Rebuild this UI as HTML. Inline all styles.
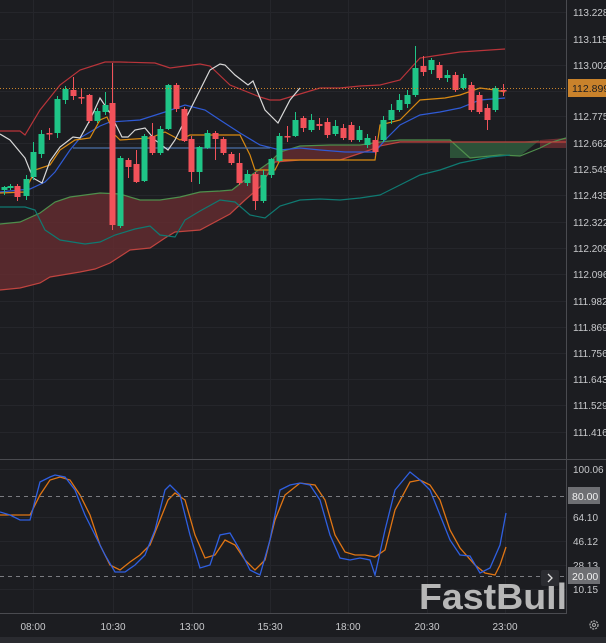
<!DOCTYPE html>
<html><head><meta charset="utf-8"><style>
html,body{margin:0;padding:0;background:#1c1d21;width:606px;height:643px;overflow:hidden;font-family:"Liberation Sans",sans-serif}
svg{position:absolute;left:0;top:0}
</style></head><body>
<svg id="s" width="606" height="643" viewBox="0 0 606 643">
<rect width="606" height="643" fill="#1c1d21"/>
<g id="grid" stroke="#25262b" stroke-width="1"></g>
<g id="cloud"></g>
<g id="lines" fill="none" stroke-width="1.2"></g>
<g id="candles"></g>
<line x1="0" y1="88.5" x2="566" y2="88.5" stroke="#c9822b" stroke-dasharray="1,2" stroke-width="1"/>
<g id="stoch" fill="none" stroke-width="1.3"></g>
<line x1="0" y1="496.5" x2="566" y2="496.5" stroke="#7a7b80" stroke-dasharray="4,4"/>
<line x1="0" y1="576.5" x2="566" y2="576.5" stroke="#7a7b80" stroke-dasharray="4,4"/>
<line x1="566.5" y1="0" x2="566.5" y2="614" stroke="#4a4b50"/>
<line x1="0" y1="459.5" x2="606" y2="459.5" stroke="#4a4b50"/>
<line x1="0" y1="613.5" x2="566" y2="613.5" stroke="#4a4b50"/>
<rect x="0" y="637" width="606" height="6" fill="#2a2b30"/>
<text x="419" y="609" font-size="36" font-weight="bold" fill="#c4c4c4" fill-opacity="0.92" textLength="148" lengthAdjust="spacingAndGlyphs">FastBull</text>
<g id="axis" font-size="10" fill="#c8c9cc"></g>
<rect x="568" y="79" width="38" height="18" fill="#c9822b"/>
<text x="572" y="92" font-size="10.5" fill="#1c1d21">112.899</text>
<rect x="568" y="487" width="32" height="17" fill="#6e6f73"/>
<text x="572" y="500" font-size="10.5" fill="#f0f0f0">80.00</text>
<rect x="568" y="567" width="32" height="17" fill="#6e6f73"/>
<text x="572" y="580" font-size="10.5" fill="#f0f0f0">20.00</text>
<rect x="541" y="570" width="18" height="16" rx="2" fill="#2b2c31"/>
<path d="M548 574 L552 578 L548 582" stroke="#ddd" fill="none" stroke-width="1.3"/>
<circle cx="594" cy="625" r="4" fill="none" stroke="#aaa" stroke-width="1.3" stroke-dasharray="2,1"/>
<circle cx="594" cy="625" r="1.5" fill="none" stroke="#aaa"/>
</svg>
<script>
var NS="http://www.w3.org/2000/svg";
function el(p,t,a){var e=document.createElementNS(NS,t);for(var k in a)e.setAttribute(k,a[k]);document.getElementById(p).appendChild(e);return e;}
function pts(a){return a.map(function(p){return p[0]+","+p[1]}).join(" ");}
[12,39,65,91,116,143,169,195,222,248,274,301,327,353,379,405,432,469,517,541,565,589].forEach(function(y){el("grid","line",{x1:0,x2:566,y1:y+.5,y2:y+.5});});
[33,113,192,270,348,427,505].forEach(function(x){el("grid","line",{x1:x+.5,x2:x+.5,y1:0,y2:614});});
var pl=[["113.228",12],["113.115",39],["113.002",65],["112.775",116],["112.662",143],["112.549",169],["112.435",195],["112.322",222],["112.209",248],["112.096",274],["111.982",301],["111.869",327],["111.756",353],["111.643",379],["111.529",405],["111.416",432],["100.06",469],["64.10",517],["46.12",541],["28.13",565],["10.15",589]];
pl.forEach(function(l){var t=el("axis","text",{x:573,y:l[1]+4});t.textContent=l[0];});
[["08:00",33],["10:30",113],["13:00",192],["15:30",270],["18:00",348],["20:30",427],["23:00",505]].forEach(function(l){var t=el("axis","text",{x:l[1],y:630,"text-anchor":"middle"});t.textContent=l[0];});
var A=[[0,224],[20,222],[40,213],[55,202],[70,197],[100,193],[120,194],[140,200],[160,200],[180,197],[200,192],[220,191],[232,190],[250,176],[270,162],[280,152],[300,146],[330,145],[360,145],[380,142],[400,140],[450,140],[566,140]];
var B=[[0,290],[20,288],[40,283],[50,277],[80,272],[95,269],[110,263],[130,250],[150,248],[165,238],[175,232],[200,230],[230,214],[245,200],[260,187],[275,162],[300,160],[340,160],[370,150],[380,146],[400,142],[450,142],[566,142]];
el("cloud","polygon",{points:pts(A.filter(function(p){return p[0]<=450}))+" "+pts(B.filter(function(p){return p[0]<=450}).reverse()),fill:"#6b2e32","fill-opacity":"0.75"});
el("cloud","polygon",{points:"450,140 540,140 566,138 566,140 450,140",fill:"#6b2e32"});
el("cloud","polygon",{points:"450,142 520,142 540,140 520,156 500,155 470,158 450,158",fill:"#2f5a3c","fill-opacity":"0.85"});
el("cloud","polygon",{points:"540,140 566,140 566,148 540,148",fill:"#6b2e32","fill-opacity":"0.8"});
el("lines","polyline",{points:pts(A.filter(function(p){return p[0]<=450}))+" 470,158 500,155 520,156 540,148 552,142 566,138",stroke:"#4e8f4c"});
el("lines","polyline",{points:pts(B),stroke:"#c0443f"});
var L=[
["#b8343a",[[0,131],[20,131],[25,135],[40,110],[60,85],[80,70],[105,62],[120,62],[155,63],[170,68],[200,64],[210,66],[230,85],[260,97],[270,100],[280,100],[300,94],[320,88],[340,88],[360,86],[380,85],[400,80],[420,58],[440,55],[460,52],[490,50],[505,49]]],
["#0f7a72",[[0,207],[25,207],[35,210],[45,230],[60,240],[85,244],[100,242],[115,235],[135,229],[150,226],[160,235],[175,237],[185,220],[200,211],[220,200],[235,202],[250,215],[265,218],[280,206],[300,200],[320,199],[340,200],[360,198],[380,195],[400,185],[420,175],[440,170],[460,163],[490,157],[510,155]]],
["#2f5bd6",[[0,192],[30,189],[45,182],[55,172],[70,150],[80,138],[100,126],[110,122],[140,120],[165,112],[185,105],[205,110],[220,120],[240,133],[260,145],[280,150],[300,148],[320,150],[345,152],[375,152],[385,140],[400,125],[420,115],[440,112],[460,108],[480,100],[505,98]]],
["#d98a12",[[0,193],[25,192],[35,170],[50,165],[60,150],[75,140],[90,138],[100,120],[107,117],[115,135],[120,140],[150,138],[165,132],[180,140],[190,135],[240,135],[250,155],[255,170],[275,170],[280,160],[300,160],[375,160],[380,125],[400,120],[420,100],[445,98],[460,95],[480,88],[495,90],[505,92]]],
["#4a6fa8",[[73,148],[270,148]]],
["#d8d8d8",[[0,134],[10,140],[25,158],[33,178],[42,183],[50,161],[60,147],[73,137],[80,138],[90,120],[100,98],[110,113],[122,137],[128,137],[135,130],[145,128],[155,140],[168,150],[175,140],[185,120],[200,90],[210,70],[220,64],[225,65],[235,75],[248,85],[253,81],[265,110],[278,123],[290,100],[300,88]]]
];
L.forEach(function(l){el("lines","polyline",{points:pts(l[1]),stroke:l[0]});});
var C=[[4,190,187,186,195],[10,188,186,184,190],[17,186,197,184,201],[26,196,179,175,200],[33,177,152,142,180],[41,154,134,130,158],[49,133,134,128,140],[57,133,99,96,138],[65,100,89,86,104],[73,90,96,77,100],[81,97,97,88,104],[89,95,121,94,123],[97,121,111,108,123],[105,112,105,92,115],[112,103,225,63,230],[120,226,158,156,228],[128,160,167,158,178],[136,164,182,150,183],[144,181,136,134,182],[152,136,153,123,155],[160,153,129,126,155],[168,129,85,84,130],[176,85,109,83,112],[184,109,141,107,142],[191,139,172,136,182],[199,172,147,146,184],[207,148,133,130,149],[215,133,139,131,160],[223,139,153,137,155],[231,154,163,152,165],[239,163,183,153,185],[247,183,174,170,186],[255,174,201,172,210],[263,201,175,170,203],[271,175,159,158,178],[279,161,136,133,162],[287,136,136,126,142],[295,136,120,112,137],
[303,118,128,116,132],[311,130,120,114,132],[319,124,126,118,130],[327,122,135,118,138],[335,134,126,120,136],[343,128,138,124,140],[351,125,140,122,142],[359,140,130,126,142],[367,145,138,134,148],[375,140,152,136,155],[383,140,120,116,142],[391,120,110,104,124],[399,110,100,94,112],[407,104,95,90,108],[415,95,68,46,97],[423,66,72,56,76],[431,70,60,58,74],[439,65,78,62,80],[447,78,75,70,82],[455,75,90,72,92],[463,88,78,74,90],[471,85,110,82,112],[479,95,112,92,114],[487,108,120,104,130],[495,110,88,86,112],[503,90,91,84,96]];
C.forEach(function(c){var up=c[2]<c[1];var col=up?"#1fc587":"#f2525a";
el("candles","line",{x1:c[0]+.5,x2:c[0]+.5,y1:c[3],y2:c[4],stroke:col});
var t=Math.min(c[1],c[2]),h=Math.max(1.5,Math.abs(c[1]-c[2]));
el("candles","rect",{x:c[0]-2.5,y:t,width:6,height:h,fill:col});});
var S1=[[0,512],[10,515],[20,520],[30,520],[40,482],[50,477],[55,475],[65,477],[75,490],[85,515],[95,535],[105,555],[115,572],[125,572],[135,565],[145,555],[155,530],[165,490],[170,485],[180,495],[190,535],[200,568],[210,565],[220,535],[230,533],[240,550],[250,570],[260,575],[270,540],[280,490],[290,485],[300,483],[310,485],[320,500],[330,535],[340,558],[350,560],[360,558],[370,560],[375,575],[385,530],[395,490],[410,472],[420,480],[430,490],[440,515],[450,540],[460,555],[470,556],[480,573],[490,568],[500,545],[506,513]];
var S2=[[0,515],[15,515],[30,515],[40,495],[50,480],[60,477],[70,480],[80,495],[90,515],[100,545],[110,565],[120,570],[130,562],[140,555],[150,545],[160,520],[168,500],[175,493],[185,500],[195,535],[205,558],[215,555],[225,540],[235,545],[245,560],[255,570],[265,560],[275,520],[285,495],[300,483],[315,485],[325,500],[335,535],[345,552],[355,555],[365,555],[375,557],[385,550],[395,510],[410,482],[420,480],[430,485],[440,500],[450,530],[460,548],[475,565],[485,573],[495,575],[500,565],[506,547]];
el("stoch","polyline",{points:pts(S2),stroke:"#e07514"});
el("stoch","polyline",{points:pts(S1),stroke:"#2f5fe0"});
</script>
</body></html>
